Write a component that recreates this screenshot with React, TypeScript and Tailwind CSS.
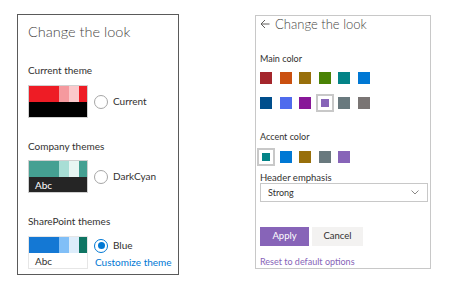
import type React from "react";

const mainColors = [
  ["#a4262c", "#ca5010", "#986f0b", "#498205", "#038387", "#0078d4"],
  ["#004e8c", "#4f6bed", "#881798", "#8764b8", "#69797e", "#7a7574"],
];

const accentColors = ["#038387", "#0078d4", "#986f0b", "#69797e", "#8764b8"];

function Radio({ checked = false }: { checked?: boolean }) {
  if (checked)
    return (
      <span className="flex h-[14px] w-[14px] items-center justify-center rounded-full border border-[#0078d4] bg-white">
        <span className="h-[7px] w-[7px] rounded-full bg-[#0078d4]" />
      </span>
    );
  return (
    <span className="h-[14px] w-[14px] rounded-full border border-[#a6a6a6] bg-white" />
  );
}

function ThemeSwatch({
  colors,
  bottom,
  text,
}: {
  colors: string[];
  bottom: string;
  text?: string;
}) {
  const light = bottom === "#ffffff";
  return (
    <div
      className={
        light
          ? "flex h-[33px] w-[60px] flex-col border border-[#e6e6e6]"
          : "flex h-[33px] w-[60px] flex-col border border-[#d0d0d0]"
      }
    >
      <div className="flex h-[16px]">
        <div className="w-[30px]" style={{ background: colors[0] }} />
        <div className="w-[10px]" style={{ background: colors[1] }} />
        <div className="w-[10px]" style={{ background: colors[2] }} />
        <div className="flex-1" style={{ background: colors[3] }} />
      </div>
      <div
        className="flex flex-1 items-center pl-[6px] text-[10px] leading-none"
        style={{ background: bottom, color: light ? "#323130" : "#ffffff" }}
      >
        {text}
      </div>
    </div>
  );
}

function Swatch({ color, selected = false }: { color: string; selected?: boolean }) {
  if (selected)
    return (
      <div className="flex h-3 w-3 items-center justify-center bg-white outline-2 outline-offset-1 outline-[#c8c8c8]">
        <div className="h-2 w-2" style={{ background: color }} />
      </div>
    );
  return <div className="h-3 w-3" style={{ background: color }} />;
}

function LeftPanel() {
  return (
    <div className="flex h-[261px] w-[162px] flex-col border border-[#5a5a5a] pl-[10px] pt-[7px] text-[#323130]">
      <div className="text-[14.5px] font-light leading-[20px] text-[#484644]">
        Change the look
      </div>

      <div className="mt-[21px] text-[10px] leading-[14px]">Current theme</div>
      <div className="mt-[8px] flex items-center">
        <ThemeSwatch
          colors={["#ee1c25", "#f5999e", "#fbc8cb", "#ee1c25"]}
          bottom="#000000"
        />
        <div className="ml-[6px] flex items-center">
          <Radio />
          <span className="ml-[5px] text-[10px]">Current</span>
        </div>
      </div>

      <div className="mt-[21px] text-[10px] leading-[14px]">Company themes</div>
      <div className="mt-[7px] flex items-center">
        <ThemeSwatch
          colors={["#45a092", "#a8ded5", "#e8f6f3", "#45a092"]}
          bottom="#252525"
          text="Abc"
        />
        <div className="ml-[6px] flex items-center">
          <Radio />
          <span className="ml-[5px] text-[10px]">DarkCyan</span>
        </div>
      </div>

      <div className="mt-[21px] text-[10px] leading-[14px]">SharePoint themes</div>
      <div className="mt-[8px] flex items-start">
        <ThemeSwatch
          colors={["#1478d4", "#81bff7", "#ddedfb", "#0f7563"]}
          bottom="#ffffff"
          text="Abc"
        />
        <div className="ml-[6px] flex flex-col">
          <div className="mt-[2px] flex items-center">
            <Radio checked />
            <span className="ml-[5px] text-[10px]">Blue</span>
          </div>
          <span className="ml-[1px] mt-[2px] whitespace-nowrap text-[10px] leading-[14px] text-[#0078d4]">
            Customize theme
          </span>
        </div>
      </div>
    </div>
  );
}

function RightPanel() {
  return (
    <div className="flex h-[254px] w-[176px] flex-col border border-[#c8c8c8] pl-[4px] text-[#323130]">
      <div className="flex items-center text-[13px] leading-[16px] text-[#484644]">
        <svg width="10" height="10" viewBox="0 0 10 10" className="mr-[5px]">
          <path
            d="M9.5 5H1M5 1 1 5l4 4"
            fill="none"
            stroke="#605e5c"
            strokeWidth="1"
          />
        </svg>
        <span className="font-light">Change the look</span>
      </div>

      <div className="mt-[21px] text-[9px] leading-[12px]">Main color</div>
      <div className="mt-[7px] flex gap-[7.5px]">
        {mainColors[0].map((c) => (
          <Swatch key={c} color={c} />
        ))}
      </div>
      <div className="mt-[13px] flex gap-[7.5px]">
        {mainColors[1].map((c, i) => (
          <Swatch key={c} color={c} selected={i === 3} />
        ))}
      </div>

      <div className="mt-[22px] text-[9px] leading-[12px]">Accent color</div>
      <div className="mt-[8px] flex gap-[7.5px]">
        {accentColors.map((c, i) => (
          <Swatch key={c} color={c} selected={i === 0} />
        ))}
      </div>

      <div className="mt-[9px] text-[9.5px] leading-[11px]">Header emphasis</div>
      <div className="flex h-[20px] w-[168px] items-center justify-between border border-[#c8c8c8] pl-[7px] pr-[8px] text-[9px]">
        <span>Strong</span>
        <svg width="8" height="5" viewBox="0 0 8 5">
          <path d="M0.5 0.5 4 4l3.5-3.5" fill="none" stroke="#8a8886" strokeWidth="1" />
        </svg>
      </div>

      <div className="mt-[25px] flex gap-[3px]">
        <button className="h-[19px] w-[49px] bg-[#8764b8] text-[9.5px] text-white">
          Apply
        </button>
        <button className="h-[19px] w-[51px] bg-[#f3f2f1] text-[9.5px] text-[#323130]">
          Cancel
        </button>
      </div>

      <div className="mt-[10px] text-[9px] leading-[12px] text-[#8764b8]">
        Reset to default options
      </div>
    </div>
  );
}

export default function App() {
  return (
    <div
      className="flex h-[287px] w-[450px] items-start bg-white pl-[17px] pt-[14px]"
      style={{ fontFamily: 'Lato, "Open Sans", sans-serif' } as React.CSSProperties}
    >
      <LeftPanel />
      <div className="ml-[76px] mt-[1px]">
        <RightPanel />
      </div>
    </div>
  );
}
